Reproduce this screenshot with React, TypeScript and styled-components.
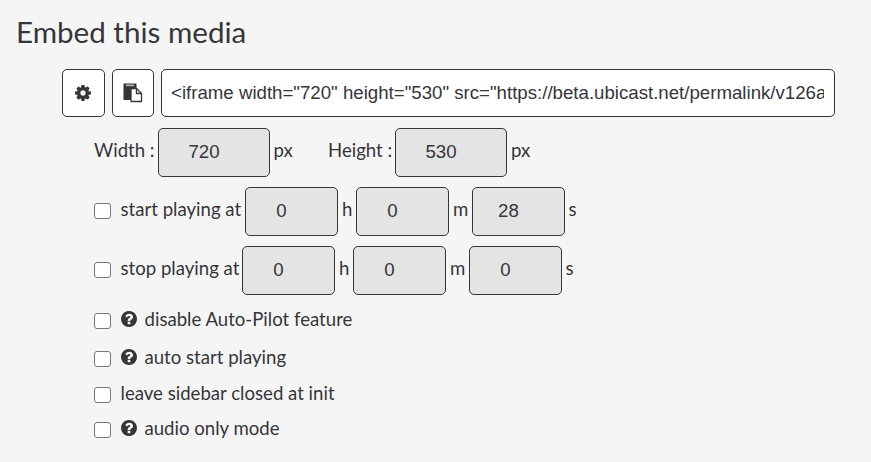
import React from "react";
import styled, { createGlobalStyle } from "styled-components";

const GlobalStyle = createGlobalStyle`
  * { box-sizing: border-box; }
  body { margin: 0; background: #f5f5f5; color: #35353a; font-family: Lato, sans-serif; font-size: 18.6px; }
`;

const Page = styled.main`
  width: 871px;
  height: 462px;
  overflow: hidden;
  padding: 14px 36px 0 16px;
  background: #f5f5f5;
`;

const Title = styled.h1`
  margin: 0 0 19px;
  font-size: 29.6px;
  line-height: 36px;
  font-weight: 400;
  white-space: nowrap;
`;

const EmbedBar = styled.div`
  display: flex;
  gap: 7px;
  height: 48px;
  margin-left: 46px;
`;

const IconButton = styled.button<{ $width: number }>`
  display: flex;
  flex: none;
  align-items: center;
  justify-content: center;
  width: ${(p) => p.$width}px;
  padding: 0 1px 1px 0;
  color: #35353a;
  background: #fff;
  border: 1px solid #35353a;
  border-radius: 5px;
`;

const CodeInput = styled.input`
  flex: 1;
  min-width: 0;
  padding: 0 10px 0 9px;
  color: #35353a;
  background: #fff;
  border: 1px solid #35353a;
  border-radius: 5px;
  font: 18.67px "Liberation Sans", Arial, sans-serif;
`;

const Options = styled.div`
  display: flex;
  flex-direction: column;
  margin: 11px 0 0 78px;
`;

const FieldRow = styled.div`
  display: flex;
  height: 49px;
  margin-bottom: 10px;
  line-height: 45px;
  white-space: nowrap;
`;

const Cell = styled.span<{ $width: number; $pad?: number }>`
  flex: none;
  width: ${(p) => p.$width}px;
  padding-left: ${(p) => p.$pad ?? 0}px;
`;

const NumberInput = styled.input<{ $width: number }>`
  flex: none;
  width: ${(p) => p.$width}px;
  height: 49px;
  padding: 0 20px 2px 0;
  text-align: center;
  color: #35353a;
  background: #e4e4e4;
  border: 1px solid #35353a;
  border-radius: 5px;
  font: 18.67px "Liberation Sans", Arial, sans-serif;
`;

const Checkbox = styled.input.attrs({ type: "checkbox" })<{ $top: number }>`
  appearance: none;
  flex: none;
  width: 17px;
  height: 16px;
  margin: ${(p) => p.$top}px 9.5px 0 0;
  background: #fff;
  border: 1px solid #75757a;
  border-radius: 3px;
`;

const CheckRow = styled.label<{ $height: number }>`
  display: flex;
  height: ${(p) => p.$height}px;
  line-height: 28px;
  white-space: nowrap;
`;

const HelpSvg = styled.svg`
  flex: none;
  width: 16px;
  height: 16px;
  margin: 6px 8px 0 0;
`;

const HelpIcon = () => (
  <HelpSvg viewBox="128 128 1536 1536" fill="currentColor">
    <path d="M1024 1376v-192q0-14-9-23t-23-9h-192q-14 0-23 9t-9 23v192q0 14 9 23t23 9h192q14 0 23-9t9-23zm256-672q0-88-55.5-163t-138.5-116-170-41q-243 0-371 213-15 24 8 42l132 100q7 6 19 6 16 0 25-12 53-68 86-92 34-24 86-24 48 0 85.5 26t37.5 59q0 38-20 61t-68 45q-63 28-115.5 86.5t-52.5 125.5v36q0 14 9 23t23 9h192q14 0 23-9t9-23q0-19 21.5-49.5t54.5-49.5q32-18 49-28.5t46-35 44.5-48 28-60.5 12.5-81zm384 192q0 209-103 385.5t-279.5 279.5-385.5 103-385.5-103-279.5-279.5-103-385.5 103-385.5 279.5-279.5 385.5-103 385.5 103 279.5 279.5 103 385.5z" />
  </HelpSvg>
);

const GearIcon = () => (
  <svg width="16" height="16" viewBox="128 128 1536 1536" fill="currentColor">
    <path d="M1152 896q0-106-75-181t-181-75-181 75-75 181 75 181 181 75 181-75 75-181zm512-109v222q0 12-8 23t-20 13l-185 28q-19 54-39 91 35 50 107 138 10 12 10 25t-9 23q-27 37-99 108t-94 71q-12 0-26-9l-138-108q-44 23-91 38-16 136-29 186-7 28-36 28h-222q-14 0-24.5-8.5t-11.5-21.5l-28-184q-49-16-90-37l-141 107q-10 9-25 9-14 0-25-11-126-114-165-168-7-10-7-23 0-12 8-23 15-21 51-66.5t54-70.5q-27-50-41-99l-183-27q-13-2-21-12.5t-8-23.5v-222q0-12 8-23t19-13l186-28q14-46 39-92-40-57-107-138-10-12-10-24 0-10 9-23 26-36 98.5-107.5t94.5-71.5q13 0 26 10l138 107q44-23 91-38 16-136 29-186 7-28 36-28h222q14 0 24.5 8.5t11.5 21.5l28 184q49 16 90 37l142-107q9-9 24-9 13 0 25 10 129 119 165 170 7 8 7 22 0 12-8 23-15 21-51 66.5t-54 70.5q26 50 41 98l183 28q13 2 21 12.5t8 23.5z" />
  </svg>
);

const PasteIcon = () => (
  <svg width="20" height="20" viewBox="0 0 20 20" fill="none">
    <path d="M0.5 0.5H13.5V5.5H8V17H0.5Z" fill="#35353a" />
    <path d="M3 1.5H11V3.2H3Z" fill="#b4b4b7" />
    <path d="M8 5.5H13.5L18.5 10.5V18.5H8Z" fill="#fff" stroke="#35353a" strokeWidth="1.3" strokeLinejoin="round" />
    <path d="M13.5 5.5V10.5H18.5" stroke="#35353a" strokeWidth="1.3" />
  </svg>
);

interface TimeProps {
  label: string;
  labelWidth: number;
  values: [number, number, number];
}

const TimeRow = ({ label, labelWidth, values }: TimeProps) => (
  <FieldRow>
    <Checkbox $top={16} aria-label={label} />
    <Cell $width={labelWidth}>{label}</Cell>
    <NumberInput $width={93} defaultValue={values[0]} />
    <Cell $width={18} $pad={4}>h</Cell>
    <NumberInput $width={93} defaultValue={values[1]} />
    <Cell $width={23} $pad={4}>m</Cell>
    <NumberInput $width={93} defaultValue={values[2]} />
    <Cell $width={16} $pad={3.5}>s</Cell>
  </FieldRow>
);

const checks = [
  { label: "disable Auto-Pilot feature", help: true, height: 38 },
  { label: "auto start playing", help: true, height: 36 },
  { label: "leave sidebar closed at init", help: false, height: 35 },
  { label: "audio only mode", help: true, height: 35 },
];

export default function App() {
  return (
    <Page>
      <GlobalStyle />
      <Title>Embed this media</Title>
      <EmbedBar>
        <IconButton $width={43} aria-label="Settings"><GearIcon /></IconButton>
        <IconButton $width={42} aria-label="Copy"><PasteIcon /></IconButton>
        <CodeInput
          readOnly
          value={'<iframe width="720" height="530" src="https://beta.ubicast.net/permalink/v126a'}
        />
      </EmbedBar>
      <Options>
        <FieldRow>
          <Cell $width={64}>Width :</Cell>
          <NumberInput $width={112} defaultValue="720" />
          <Cell $width={58} $pad={3.5}>px</Cell>
          <Cell $width={67}>Height :</Cell>
          <NumberInput $width={112} defaultValue="530" />
          <Cell $width={30} $pad={4}>px</Cell>
        </FieldRow>
        <TimeRow label="start playing at" labelWidth={124.5} values={[0, 0, 28]} />
        <TimeRow label="stop playing at" labelWidth={121.5} values={[0, 0, 0]} />
        {checks.map((c) => (
          <CheckRow key={c.label} $height={c.height}>
            <Checkbox $top={8} />
            {c.help && <HelpIcon />}
            {c.label}
          </CheckRow>
        ))}
      </Options>
    </Page>
  );
}
